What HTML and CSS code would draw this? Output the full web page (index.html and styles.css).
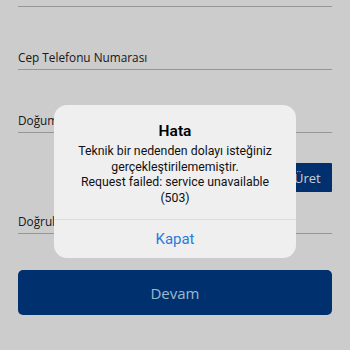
FILE: index.html
```html
<!DOCTYPE html>
<html lang="tr">
<head>
<meta charset="utf-8">
<link rel="stylesheet" href="styles.css">
</head>
<body>
<div class="page">
  <div class="form">
    <div class="field field-top"></div>
    <div class="field"><span class="label">Cep Telefonu Numarası</span></div>
    <div class="field"><span class="label">Doğum Tarihi</span></div>
    <div class="code-row"><button class="gen-btn">Üret</button></div>
    <div class="field field-short"><span class="label">Doğrulama Kodu</span></div>
    <button class="primary-btn">Devam</button>
  </div>
  <div class="overlay"></div>
  <div class="alert">
    <div class="alert-body">
      <div class="alert-title">Hata</div>
      <div class="alert-msg">Teknik bir nedenden dolayı isteğiniz<br>gerçekleştirilememiştir.<br>Request failed: service unavailable<br>(503)</div>
    </div>
    <div class="alert-action">Kapat</div>
  </div>
</div>
</body>
</html>
```

FILE: styles.css
```css
html, body {
  margin: 0;
  padding: 0;
}
body {
  width: 350px;
  height: 350px;
  overflow: hidden;
  background: #ffffff;
  font-family: "Open Sans", "Noto Sans", sans-serif;
}
.page {
  position: relative;
  width: 350px;
  height: 350px;
}
.form {
  padding: 0 18px;
  display: flex;
  flex-direction: column;
}
.field {
  border-bottom: 1px solid #bcbcbc;
  display: flex;
  align-items: flex-end;
  padding-bottom: 4px;
  box-sizing: border-box;
  height: 63px;
}
.field-top {
  height: 7px;
  padding: 0;
}
.field-short {
  height: 42px;
}
.label {
  font-size: 11.8px;
  line-height: 16px;
  color: #222222;
}
.code-row {
  display: flex;
  justify-content: flex-end;
  padding-top: 30px;
}
.gen-btn {
  width: 44px;
  height: 29px;
  border: none;
  border-radius: 1px;
  background: #003c8a;
  color: #ffffff;
  font-family: "Open Sans", sans-serif;
  font-size: 13px;
  padding: 0 0 0 6px;
  text-align: left;
}
.primary-btn {
  margin-top: 36px;
  height: 45px;
  border: none;
  border-radius: 5px;
  background: #003c8a;
  color: #c2e6ff;
  font-family: "Open Sans", sans-serif;
  font-size: 15px;
}
.overlay {
  position: absolute;
  inset: 0;
  background: rgba(0, 0, 0, 0.2);
}
.alert {
  position: absolute;
  left: 54px;
  top: 105px;
  width: 242px;
  background: #efeff0;
  border-radius: 13px;
  font-family: "Roboto", "Liberation Sans", sans-serif;
  text-align: center;
  overflow: hidden;
}
.alert-body {
  padding: 17px 6px 13px;
  border-bottom: 1px solid #dcdcdc;
}
.alert-title {
  font-size: 15.5px;
  line-height: 18px;
  font-weight: 600;
  color: #000000;
  margin-bottom: 4px;
}
.alert-msg {
  font-size: 12.3px;
  line-height: 15.5px;
  color: #111111;
}
.alert-action {
  height: 38px;
  line-height: 38px;
  font-size: 15px;
  color: #2b7bd9;
}
```
